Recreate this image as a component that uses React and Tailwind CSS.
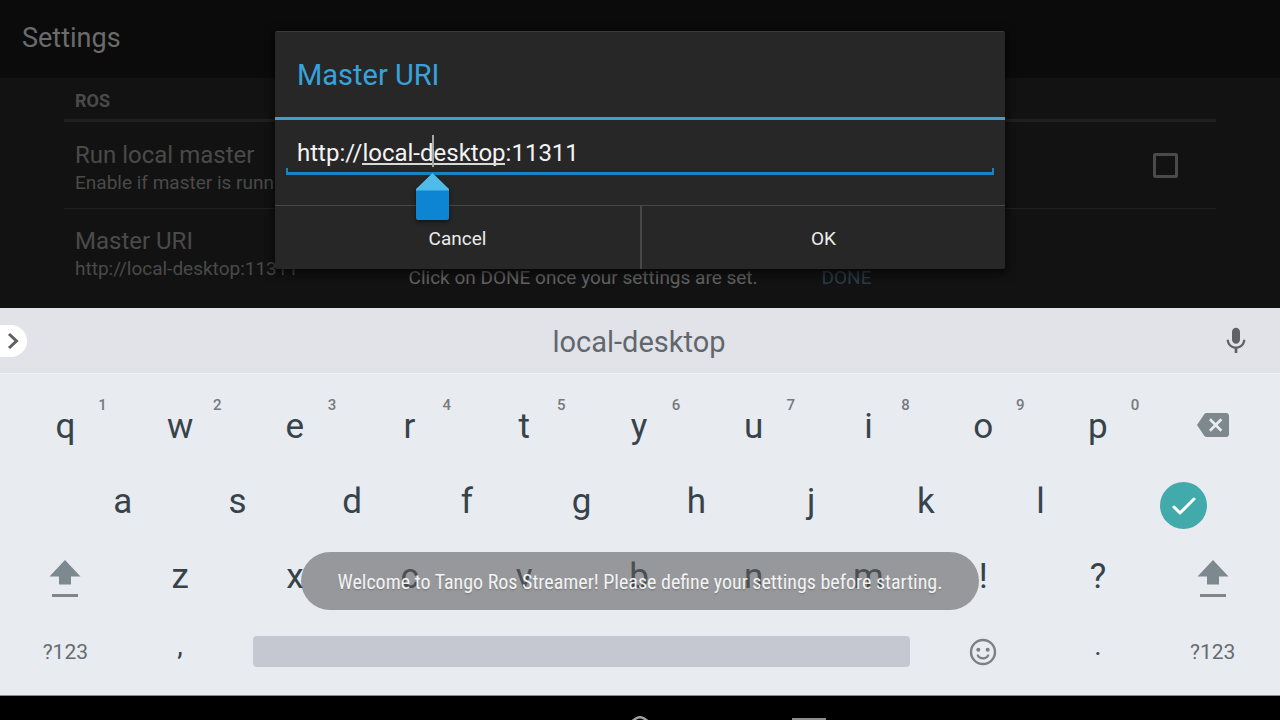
import { useState } from 'react';
import { MdBackspace, MdMic } from 'react-icons/md';

const topRow = [
  ['q', '1'], ['w', '2'], ['e', '3'], ['r', '4'], ['t', '5'],
  ['y', '6'], ['u', '7'], ['i', '8'], ['o', '9'], ['p', '0'],
];
const middleRow = ['a', 's', 'd', 'f', 'g', 'h', 'j', 'k', 'l'];
const bottomRow = ['z', 'x', 'c', 'v', 'b', 'n', 'm', '!', '?'];

const ShiftIcon = () => (
  <svg width="32" height="38" viewBox="0 0 32 38" aria-hidden="true">
    <path d="M16 0 L31.500 16.500 H22 V24.500 H10 V16.500 H0.500 Z" fill="#7c898f" />
    <rect x="3" y="34" width="26" height="3" fill="#82858a" />
  </svg>
);

const SmileIcon = () => (
  <svg width="28" height="28" viewBox="0 0 28 28" fill="none" stroke="#7b8085" aria-hidden="true">
    <circle cx="14" cy="14" r="12" strokeWidth="2.400" />
    <circle cx="9.300" cy="11.700" r="2" fill="#7b8085" stroke="none" />
    <circle cx="18.700" cy="11.700" r="2" fill="#7b8085" stroke="none" />
    <path d="M8.800 17.500 C11 21.300 17 21.300 19.200 17.500" strokeWidth="2.200" strokeLinecap="round" />
  </svg>
);

const CheckIcon = () => (
  <svg width="26" height="20" viewBox="0 0 26 20" fill="none" aria-hidden="true">
    <path d="M3 11 L9 17 L23 3" stroke="#fff" strokeWidth="3" strokeLinecap="round" strokeLinejoin="round" />
  </svg>
);

const Key = ({ label, hint }) => (
  <button type="button" className="relative col-span-2 flex h-full items-center justify-center text-[35px] leading-10 text-[#37434a]">
    {label}
    {hint && <span className="absolute top-2 right-4 text-[15px] leading-4 font-medium text-[#77797d]">{hint}</span>}
  </button>
);

const ShiftKey = () => (
  <button type="button" aria-label="Shift" className="col-span-2 flex items-center justify-center pt-1">
    <ShiftIcon />
  </button>
);

const SymbolsKey = () => (
  <button type="button" className="col-span-2 pt-[2px] text-[21px] text-[#666b70]">?123</button>
);

const Keyboard = () => (
  <section className="relative border-b border-[#8a8a8c] bg-[#e8ebf0]">
    <div className="grid h-[66px] grid-cols-[1fr_auto_1fr] items-center border-b border-[#eff1f5] bg-[#e1e3e8]">
      <button type="button" aria-label="More" className="flex h-8 w-[27px] items-center justify-center rounded-r-full bg-white pr-[2px]">
        <svg width="12" height="18" viewBox="0 0 12 18" fill="none" aria-hidden="true">
          <path d="M2 2 L9.500 9 L2 16" stroke="#606060" strokeWidth="3" />
        </svg>
      </button>
      <button type="button" className="pt-1 pr-[2px] text-[29px] text-[#62676f]">local-desktop</button>
      <button type="button" aria-label="Voice input" className="justify-self-end pr-7 text-[#606165]">
        <MdMic size={32} />
      </button>
    </div>

    <div className="grid auto-rows-[75px] grid-cols-22 pt-[15px] pr-[10px] pb-[6px] pl-2">
      {topRow.map(([label, hint]) => <Key key={label} label={label} hint={hint} />)}
      <button type="button" aria-label="Backspace" className="col-span-2 flex items-center justify-center pb-1 text-[#7e898e]">
        <MdBackspace size={32} />
      </button>

      <span />
      {middleRow.map((label) => <Key key={label} label={label} />)}
      <button type="button" aria-label="Done" className="col-span-3 flex items-center justify-center pt-2">
        <span className="flex size-[47px] items-center justify-center rounded-full bg-[#43aaac]">
          <CheckIcon />
        </span>
      </button>

      <ShiftKey />
      {bottomRow.map((label) => <Key key={label} label={label} />)}
      <ShiftKey />

      <SymbolsKey />
      <button type="button" className="col-span-2 pb-3 text-[28px] text-[#37434a]">,</button>
      <button type="button" aria-label="Space" className="col-span-12 mx-4 h-[31px] self-center rounded-sm bg-[#c5c8d0]" />
      <button type="button" aria-label="Emoji" className="col-span-2 flex items-center justify-center">
        <SmileIcon />
      </button>
      <button type="button" className="col-span-2 pb-3 text-[28px] text-[#37434a]">.</button>
      <SymbolsKey />
    </div>

    <div className="pointer-events-none absolute inset-x-0 bottom-[85px] flex justify-center">
      <p
        role="status"
        className="rounded-full bg-[#5a5a5a]/57 px-9 pt-[17px] pb-[15px] font-['Roboto_Condensed','Liberation_Sans_Narrow',sans-serif] text-[20px] leading-[26px] text-white/90 text-shadow-sm"
      >
        Welcome to Tango Ros Streamer! Please define your settings before starting.
      </p>
    </div>
  </section>
);

const MasterUriDialog = ({ uri, onChange }) => (
  <form
    role="dialog"
    aria-labelledby="dialog-title"
    onSubmit={(e) => e.preventDefault()}
    className="w-[730px] rounded-xs border-t border-[#3a3a3a] bg-[#272727] shadow-[0_3px_8px_2px_rgba(0,0,0,0.6)]"
  >
    <div className="flex h-[88px] items-center border-b-3 border-[#3d9fd8] px-[22px] pt-[2px]">
      <h2 id="dialog-title" className="text-[29px] text-[#37a2dc]">
        <label htmlFor="uri">Master URI</label>
      </h2>
    </div>
    <div className="relative mx-[11px] mt-3 mb-[30px]">
      <input
        id="uri"
        type="text"
        spellCheck={false}
        value={uri}
        onChange={(e) => onChange(e.target.value)}
        className="block h-[43px] w-full border-b-3 border-[#1b83c1] px-[11px] pt-[2px] text-[24px] text-[#f3f3f3] outline-none"
      />
      <span className="absolute bottom-0 left-0 h-[7px] w-[2px] bg-[#1b83c1]" />
      <span className="absolute right-0 bottom-0 h-[7px] w-[2px] bg-[#1b83c1]" />
      {/* spelling underline, caret and its drag handle */}
      <span className="absolute bottom-[10px] left-[76px] h-[2px] w-[143px] bg-[#d8d8d8]" />
      <span className="absolute bottom-2 left-[146px] h-8 w-[2px] bg-[#a8a8a8]" />
      <svg className="absolute top-[41px] left-[129px] drop-shadow-[0_2px_2px_rgba(0,0,0,0.5)]" width="35" height="48" viewBox="0 0 35 48" aria-hidden="true">
        <path d="M1 17 H34 V45 Q34 47 32 47 H3 Q1 47 1 45 Z" fill="#0d85d2" />
        <path d="M17.500 0 L34 16 V17.500 H1 V16 Z" fill="#4fbbe9" />
      </svg>
    </div>
    <div className="grid grid-cols-2 border-t border-[#474747] text-[19px] text-[#ececec]">
      <button type="button" className="h-[63px] pt-1">Cancel</button>
      <button type="submit" className="h-[63px] border-l-2 border-[#474747] pt-1">OK</button>
    </div>
  </form>
);

const Settings = () => {
  const [uri, setUri] = useState('http://local-desktop:11311');
  const [local, setLocal] = useState(false);

  return (
    <main className="relative min-h-0 flex-1 overflow-hidden bg-[#121212] text-[#4a4a4a]">
      <header className="flex h-[78px] items-center bg-[#0b0b0b] px-[22px] pb-[2px]">
        <h1 className="text-[27px] text-[#6b6b6b]">Settings</h1>
      </header>
      <div className="px-16">
        <h2 className="flex h-11 items-center border-b-3 border-[#202020] px-[11px] pt-1 text-[18px] font-bold">ROS</h2>
        <div className="flex h-[87px] items-center justify-between border-b border-[#202020] pr-[38px] pl-[11px]">
          <label htmlFor="local" className="pt-[3px]">
            <span className="block text-[24px] leading-8">Run local master</span>
            <span className="block text-[19px] leading-6">Enable if master is running</span>
          </label>
          <input
            id="local"
            type="checkbox"
            checked={local}
            onChange={(e) => setLocal(e.target.checked)}
            className="size-[25px] appearance-none rounded-xs border-3 border-[#4a4a4a] checked:bg-[#4a4a4a]"
          />
        </div>
        <div className="flex h-[87px] flex-col justify-center pt-px pl-[11px]">
          <p className="text-[24px] leading-8">Master URI</p>
          <p className="text-[19px] leading-6">{uri}</p>
        </div>
      </div>

      <div className="absolute inset-x-0 bottom-0 flex h-[60px] items-center justify-center gap-16 text-[19px]">
        <p className="text-[#626262]">Click on DONE once your settings are set.</p>
        <button type="button" className="text-[#2b3c44]">DONE</button>
      </div>

      <div className="absolute inset-x-0 top-[31px] flex justify-center">
        <MasterUriDialog uri={uri} onChange={setUri} />
      </div>
    </main>
  );
};

const NavBar = () => (
  <nav className="flex h-6 justify-center overflow-hidden bg-black">
    <div className="grid grid-cols-[169px_169px_169px] items-start justify-items-center">
      <button type="button" aria-label="Home" className="col-start-2 pt-5">
        <svg width="36" height="36" viewBox="0 0 36 36" fill="none" aria-hidden="true">
          <path d="M2 11 L14 2.500 Q18 0 22 2.500 L34 11 V34 H2 Z" stroke="#a0a0a0" strokeWidth="2.500" />
        </svg>
      </button>
      <button type="button" aria-label="Recent apps" className="pt-[22px]">
        <svg width="34" height="30" viewBox="0 0 34 30" fill="none" aria-hidden="true">
          <rect x="1" y="1" width="32" height="28" stroke="#8c8c8c" strokeWidth="2" />
        </svg>
      </button>
    </div>
  </nav>
);

export default function App() {
  return (
    <div className="flex h-screen flex-col overflow-hidden bg-black font-[Roboto,sans-serif]">
      <Settings />
      <Keyboard />
      <NavBar />
    </div>
  );
}
